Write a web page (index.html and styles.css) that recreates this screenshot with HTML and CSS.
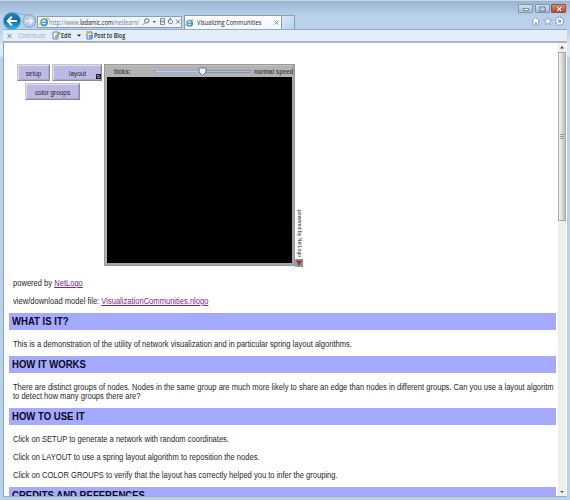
FILE: index.html
```html
<!DOCTYPE html>
<html lang="en">
<head>
<meta charset="utf-8">
<title>Visualizing Communities</title>
<link rel="stylesheet" href="styles.css">
</head>
<body>
<svg class="defs" width="0" height="0"><defs>
<symbol id="ie" viewBox="0 0 10 10"><circle cx="5" cy="5.3" r="3.1" fill="#e4f5ff" stroke="#2b9bd8" stroke-width="1.8"/><path d="M2.5 5.4h6" stroke="#2b9bd8" stroke-width="1.3"/><path d="M1 8.7C0 6 5 .3 9 1.3c.7.5.3 1.5 0 2" fill="none" stroke="#efbe35" stroke-width="1.1"/></symbol>
</defs></svg>
<div class="window">
  <header class="titlebar">
    <div class="controls">
      <span class="control"><svg width="14" height="8"><rect x="4.5" y="3.5" width="5" height="2" fill="#fff" stroke="#68798c" stroke-width=".8"/></svg></span>
      <span class="control"><svg width="14" height="8"><rect x="5" y="2" width="5" height="4" fill="#fff" stroke="#596b80"/><path d="M6.5 4h2" stroke="#596b80"/></svg></span>
      <span class="control close"><svg width="14" height="8"><path d="M5.2 2l4 4m0-4l-4 4" stroke="#713f3d" stroke-width="2.3"/><path d="M5.2 2l4 4m0-4l-4 4" stroke="#fff" stroke-width="1.3"/></svg></span>
    </div>
  </header>
  <nav class="navigation">
    <svg class="nav-buttons" width="37" height="18" viewBox="0 0 37 18">
      <defs><linearGradient id="back" x2="0" y2="1"><stop stop-color="#2e83b5"/><stop offset=".48" stop-color="#0b6da9"/><stop offset="1" stop-color="#35b9e8"/></linearGradient></defs>
      <path d="M9 1C16 0 18 4 27 3" fill="none" stroke="#8ba6c1"/>
      <circle cx="26.4" cy="9" r="6.3" fill="#b8cbe1" stroke="#8ba3bf"/>
      <path d="M22.5 9h7M26.5 6l3 3-3 3" fill="none" stroke="#edf5fc" stroke-width="1.5"/>
      <circle cx="9" cy="9" r="8.6" fill="url(#back)" stroke="#729dbd" stroke-width=".7"/>
      <path d="M14 9H5M8.8 4.8L4.7 9l4.1 4.2" fill="none" stroke="#fff" stroke-width="2"/>
    </svg>
    <div class="address">
      <svg class="ie" width="10" height="10"><use href="#ie"/></svg>
      <span class="url">http://www.<b>ladamic.com</b>/netlearn/</span>
      <svg class="address-icons" width="40" height="10" fill="none" stroke="#5b6673" stroke-width=".9">
        <circle cx="4.7" cy="3.8" r="2.2"/><path d="M3.2 5.5L1 7.7M34 2.7l4 4M38 2.7l-4 4"/><path d="M10.5 4h3.5l-1.8 2z" fill="#5b6673" stroke="none"/><path d="M18.5 1.5h4v6h-4zM18.5 3l4 3m0-3l-4 3" stroke-width=".7"/><path d="M30.5 3.6a2.2 2.2 0 1 1-2.2-1.2M27.6 .8l1.9 1.5-1.8 1.4"/>
      </svg>
    </div>
    <div class="tab"><svg class="ie" width="9" height="10"><use href="#ie"/></svg><span class="tab-title">Visualizing Communities</span><svg class="tab-close" width="5" height="5"><path d="M.5 .5l4 4m0-4l-4 4" stroke="#8a8a8a"/></svg></div>
    <div class="new-tab"></div>
    <svg class="tools" width="34" height="11" fill="#fff" stroke="#7b8fa8" stroke-width=".7">
      <path d="M1 5.2l3.8-3.7 3.8 3.7H7.6v4H5.7V6.5H4v2.7H2v-4z"/><path d="M16.7 1l1.1 2.8 3 .1-2.4 1.9.9 3-2.6-1.7L14 8.8l.9-3-2.4-1.9 3-.1z"/>
      <circle cx="28.6" cy="5.2" r="3.4" fill="none" stroke="#7b8fa8" stroke-width="2.2" stroke-dasharray="1.6 1.07"/><circle cx="28.6" cy="5.2" r="2.6" fill="none" stroke="#fff" stroke-width="1.6"/><circle cx="28.6" cy="5.2" r="1.3" fill="#a6bdd5"/>
    </svg>
  </nav>
  <div class="commandbar">
    <svg class="bar-close" width="5" height="6"><path d="M.5 1l4 4m0-4l-4 4" stroke="#777"/></svg>
    <span class="contribute">Contribute</span>
    <svg class="edit-icon" width="9" height="9"><path d="M1 1h5v7H1z" fill="#e9f3fd" stroke="#6d8aa9"/><path d="M3 6l4-5 1.5 1.2L4 7z" fill="#e0b842" stroke="#526e84" stroke-width=".5"/></svg>
    <span class="edit">Edit</span>
    <svg class="caret" width="4" height="3"><path d="M0 .5h4L2 2.7z" fill="#222"/></svg>
    <svg class="post-icon" width="8" height="9"><path d="M1 1h5v7H1z" fill="#d9eafa" stroke="#5a7898"/><path d="M0 0h3v3H0z" fill="#e7b943"/><path d="M3 4h4v3H3z" fill="#5ba0d8"/></svg>
    <span class="post">Post to Blog</span>
  </div>
  <div class="viewport">
    <main class="document">
      <section class="applet">
        <div class="buttons">
          <span class="button setup">setup</span>
          <span class="button layout"><span class="layout-label">layout</span><svg class="forever" width="5" height="5"><path fill="#111" d="M0 0h5v5H0z"/><path d="M1.2 2.6V1.4h2.3M3.8 2.4v1.2H1.5" fill="none" stroke="#d4d0f4" stroke-width=".8"/></svg></span>
          <span class="button groups">color groups</span>
        </div>
        <div class="world">
          <div class="world-bar">
            <span class="ticks">ticks:</span>
            <svg class="slider" width="97" height="10"><rect x=".5" y="3.5" width="96" height="2" fill="#b8bdc5" stroke="#8696b0"/><path d="M1 4.5h47" stroke="#b6cef2" stroke-width="2"/><path d="M45 1h7v4l-3.5 3.5L45 5z" fill="#edf3fa" stroke="#65758b"/></svg>
            <span class="speed">normal speed</span>
          </div>
          <div class="canvas"></div>
        </div>
        <div class="credit"><span class="credit-text">powered by NetLogo</span><svg width="8" height="8"><path fill="#58bc6c" d="M0 0h8v8H0z"/><path fill="#8a87d8" d="M6 0h2v8H6z"/><path d="M0 0v8h1.5V0z" fill="#82a9d5"/><path d="M1 1l3 1 3-1-3 6z" fill="#d91420"/></svg></div>
      </section>
      <p>powered by <a>NetLogo</a></p>
      <p>view/download model file: <a>VisualizationCommunities.nlogo</a></p>
      <h2><span>WHAT IS IT?</span></h2>
      <p>This is a demonstration of the utility of network visualization and in particular spring layout algorithms.</p>
      <h2><span>HOW IT WORKS</span></h2>
      <p>There are distinct groups of nodes. Nodes in the same group are much more likely to share an edge than nodes in different groups. Can you use a layout algoritm<br>to detect how many groups there are?</p>
      <h2><span>HOW TO USE IT</span></h2>
      <p>Click on SETUP to generate a network with random coordinates.</p>
      <p>Click on LAYOUT to use a spring layout algorithm to reposition the nodes.</p>
      <p>Click on COLOR GROUPS to verify that the layout has correctly helped you to infer the grouping.</p>
      <h2><span>CREDITS AND REFERENCES</span></h2>
    </main>
    <aside class="scrollbar">
      <svg width="8" height="9"><path d="M2 5.5h4L4 3z" fill="#555"/></svg>
      <div class="thumb"><svg width="4" height="5"><path d="M0 .5h4M0 2.5h4M0 4.5h4" stroke="#999"/></svg></div>
      <svg class="down" width="8" height="9"><path d="M2 4h4L4 6z" fill="#555"/></svg>
    </aside>
  </div>
</div>
</body>
</html>
```
FILE: styles.css
```css
* { box-sizing: border-box; }
body { margin: 0; overflow: hidden; font-family: "Liberation Sans", Arial, sans-serif; color: #262626; }
.defs { position: absolute; }
svg { display: block; flex: none; }
.window { width: 570px; height: 500px; padding: 0 3px 3px; background: linear-gradient(#99b4d1, #b9d1ea 15px, #b9d1ea 29px, #dce9f7 45px, #dce9f7 55px, #b9d1ea 57px); border-top: 1px solid #c4d8df; overflow: hidden; }
.titlebar { height: 13px; display: flex; justify-content: flex-end; }
.controls { display: flex; gap: 1.5px; padding: 3px 1px 0 0; height: 12px; }
.control { width: 15px; height: 9px; border: 1px solid #8295aa; border-radius: 1px; background: linear-gradient(#d2e0ef, #a8bfd8); display: flex; align-items: center; justify-content: center; overflow: hidden; }
.close { border-color: #974d49; background: linear-gradient(#df8b78, #bf3f2e); }
.navigation { height: 15px; display: flex; align-items: flex-start; }
.nav-buttons { margin: -2px -3px 0 0; position: relative; z-index: 1; }
.address { width: 145px; height: 12px; margin-top: 2px; border: 1px solid #8b9eb4; background: #edf4fc; display: flex; align-items: center; }
.ie { margin-left: 1px; }
.url { width: 91px; margin-left: 0; white-space: nowrap; font: 7.1px/10px "Open Sans", sans-serif; color: #77808a; transform: scaleX(.79); transform-origin: left; }
.url b { color: #222; font-weight: 500; }
.address-icons { margin-left: 2px; }
.tab { width: 98px; height: 14px; margin: 1px 0 0 2px; border: 1px solid #8799ad; border-bottom: 0; background: linear-gradient(#fff, #f2f8fe); display: flex; align-items: center; }
.tab .ie { margin: 0; }
.tab-title { margin-left: 3px; width: 77px; white-space: nowrap; font: 7px/11px "Open Sans", sans-serif; color: #222; transform: scaleX(.81); transform-origin: left; }
.new-tab { width: 13px; height: 14px; margin-top: 1px; border: 1px solid #8da2ba; border-left: 0; border-bottom: 0; background: linear-gradient(135deg, #dce9f7, #bad0e9); }
.tools { margin: 2px 2px 0 auto; }
.commandbar { height: 12px; border-top: 1px solid #91acc8; background: #e4eefa; display: flex; align-items: center; white-space: nowrap; font: 6.8px/10px "Open Sans", sans-serif; }
.commandbar span { transform: scaleX(.8); transform-origin: left; }
.bar-close { margin-left: 4px; }
.contribute { width: 27px; margin-left: 6px; color: #a2abb5; }
.edit-icon { margin-left: 7px; }
.edit { width: 12px; font-weight: 600; }
.caret { margin-left: 4px; }
.post-icon { margin-left: 5px; }
.post { font-weight: 600; }
.viewport { height: 456px; border-top: 2px solid #aeb4bd; border-left: 1px solid #8fa6bd; border-bottom: 1px solid #a3adb5; background: #fff; display: flex; overflow: hidden; }
.document { width: 554px; height: 453px; overflow: hidden; padding: 21px 2.5px 0 5px; flex: none; }
.applet { height: 203px; margin: 0 0 12px 8px; display: flex; }
.buttons { display: flex; flex-wrap: wrap; gap: 2px; width: 87px; align-content: flex-start; }
.button { height: 17px; border: 1px solid #c4c4c4; border-right-color: #88889a; border-bottom-color: #88889a; box-shadow: inset 1px 1px #dddcf0, inset -1px -1px #aaa8c8; background: #bcb9e5; display: flex; align-items: center; justify-content: center; font-size: 6.4px; line-height: 8px; white-space: nowrap; }
.setup { width: 33px; padding-top: 3px; }
.layout { width: 50px; padding-top: 3px; justify-content: flex-start; }
.layout-label { width: 27px; margin-left: 16px; }
.forever { margin-top: 5px; }
.groups { width: 55px; margin-left: 8px; padding-top: 3px; }
.world { width: 191px; height: 202px; border: 3px solid #a6a6a6; border-width: 2px 3px 3px 2px; border-top-color: #c0c0c0; border-left-color: #b5b5b5; outline: 1px solid #999; outline-offset: -1px; background: #b3b3b3; }
.world-bar { height: 11px; display: flex; align-items: center; font-size: 6.5px; font-weight: bold; line-height: 10px; color: #4c4c4c; white-space: nowrap; }
.ticks { margin-left: 8px; width: 40px; flex: none; }
.speed { margin-left: 3px; transform: scaleX(.93); transform-origin: left; }
.canvas { height: 186px; background: #000; margin-left: 1px; }
.credit { width: 8px; padding-top: 145px; display: flex; flex-direction: column; align-items: center; }
.credit-text { height: 50px; writing-mode: vertical-rl; font-size: 5px; line-height: 7px; white-space: nowrap; color: #222; letter-spacing: .05px; padding-top: 1px; }
p { margin: 0 0 9px 4px; font-size: 8.5px; line-height: 9px; white-space: nowrap; transform: scaleX(.89); transform-origin: left; }
p:has(+ h2) { margin-bottom: 7px; }
a { color: #84208a; text-decoration: underline; }
h2 { margin: 0 0 10px; height: 17px; padding-left: 3px; background: #a5aaff; color: #090917; font-size: 10.4px; line-height: 17px; white-space: nowrap; }
h2 span { display: inline-block; transform: scaleX(.92); transform-origin: left; }
.scrollbar { width: 8px; height: 453px; background: #eee; display: flex; flex-direction: column; flex: none; }
.thumb { height: 169px; border: 1px solid #aaa; background: linear-gradient(90deg, #f5f5f5, #ddd 45%, #bbb); display: flex; align-items: center; justify-content: center; }
.down { margin-top: auto; }
```
